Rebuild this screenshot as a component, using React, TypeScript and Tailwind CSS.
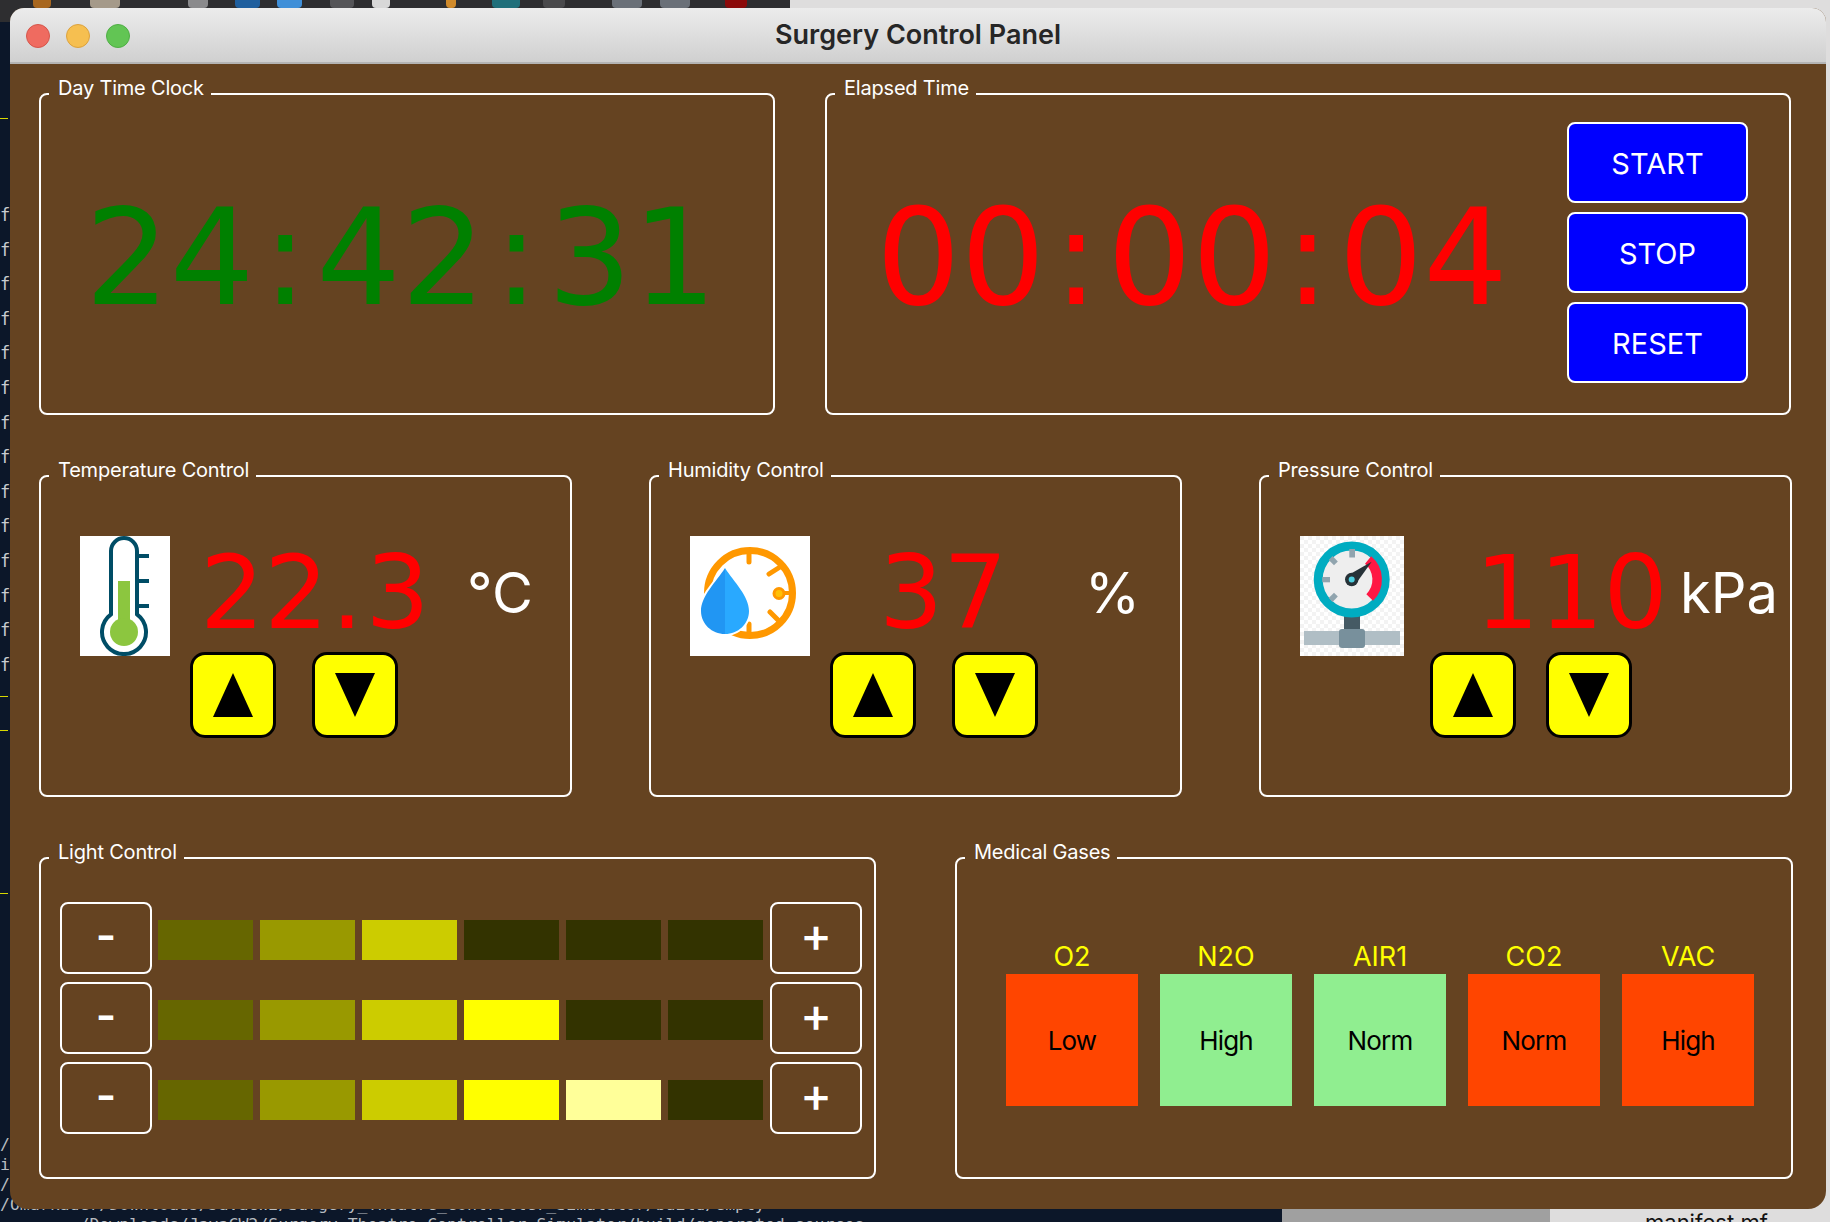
import React from "react";

const MONO = "font-['DejaVu_Sans_Mono',monospace]";
const SANS = "font-['Inter',sans-serif]";
const DIGITS = "font-['DejaVu_Sans',sans-serif]";

function Cells({ text, sep }: { text: string; sep: string }) {
  return (
    <span className={`flex whitespace-pre ${DIGITS}`} aria-label={text}>
      {text.split("").map((ch, i) =>
        /\d/.test(ch) ? (
          <span key={i}>{ch}</span>
        ) : (
          <span key={i} className={`flex justify-center ${sep}`}>
            {ch}
          </span>
        )
      )}
    </span>
  );
}

function Panel({ title, className, children }: { title: string; className: string; children?: React.ReactNode }) {
  return (
    <section className={`relative h-[322px] shrink-0 rounded-lg border-2 border-white ${className}`}>
      <span className="absolute left-[8px] top-[-19px] bg-[#654321] pl-[9px] pr-[7px] text-[20px] leading-[24px] tracking-[-0.2px] whitespace-nowrap text-white">
        {title}
      </span>
      {children}
    </section>
  );
}

function Thermometer() {
  return (
    <svg viewBox="0 0 90 120" className="h-[120px] w-[90px] shrink-0 bg-white">
      <path d="M59 20H69M59 45H69M59 70H69" stroke="#004d66" strokeWidth="4" />
      <path d="M31 78.3V15A13 13 0 0 1 57 15V78.3A22 22 0 1 1 31 78.3Z" fill="#fff" stroke="#004d66" strokeWidth="4" />
      <rect x="38" y="45" width="12" height="45" fill="#8cc63f" />
      <circle cx="44" cy="96" r="14" fill="#8cc63f" />
    </svg>
  );
}

function HumidityIcon() {
  return (
    <svg viewBox="0 0 120 120" className="h-[120px] w-[120px] shrink-0 bg-white">
      <circle cx="60" cy="57" r="42.5" fill="none" stroke="#ff9800" strokeWidth="7" />
      <path d="M59 18V26M59 88V96M90 31L79 38M80 76L89 85" stroke="#ff9800" strokeWidth="5" strokeLinecap="round" />
      <path d="M89 57H102" stroke="#ff9800" strokeWidth="4" />
      <circle cx="89" cy="57.5" r="5" fill="#ffc107" stroke="#ff9800" strokeWidth="3" />
      <path d="M35 30C24 46 9 58 9 75C9 89 21 100 35 100C49 100 61 89 61 75C61 58 46 46 35 30Z" fill="#fff" />
      <path d="M35 32C26 46 11 60 11 75C11 88 22 98 35 98Z" fill="#2196f3" />
      <path d="M35 32C44 46 59 60 59 75C59 88 48 98 35 98Z" fill="#29a9ff" />
    </svg>
  );
}

function PressureIcon() {
  return (
    <svg viewBox="0 0 104 120" className="h-[120px] w-[104px] shrink-0">
      <defs>
        <pattern id="chk" width="8" height="8" patternUnits="userSpaceOnUse">
          <rect width="8" height="8" fill="#ffffff" />
          <rect width="4" height="4" fill="#f3f3f3" />
          <rect x="4" y="4" width="4" height="4" fill="#f3f3f3" />
        </pattern>
      </defs>
      <rect width="104" height="120" fill="url(#chk)" />
      <rect x="44" y="78" width="16" height="18" fill="#455a64" />
      <rect x="4" y="95" width="96" height="14" fill="#b0bec5" />
      <rect x="39" y="93" width="26" height="19" rx="3" fill="#78909c" />
      <circle cx="51.7" cy="43.5" r="33.5" fill="#eeeeee" stroke="#00acc1" strokeWidth="9" />
      <path d="M68.1 24A25.5 25.5 0 0 1 69.7 61.5" fill="none" stroke="#ff1744" strokeWidth="9.5" />
      <rect x="49.3" y="13" width="5.7" height="8.5" fill="#90a4ae" />
      <rect x="22.3" y="41" width="7.7" height="5.3" fill="#90a4ae" />
      <rect x="29.5" y="22" width="7.5" height="5.4" fill="#90a4ae" transform="rotate(45 33.3 24.7)" />
      <rect x="29.5" y="58.6" width="7.5" height="5.4" fill="#90a4ae" transform="rotate(-45 33.3 61.3)" />
      <path d="M71.7 25.7L47.5 39.5L56 47.5Z" fill="#263238" />
      <circle cx="51.7" cy="43.5" r="6.7" fill="#263238" />
      <circle cx="51.7" cy="43.5" r="3" fill="#4dd0e1" />
    </svg>
  );
}

function Arrow({ dir }: { dir: "up" | "down" }) {
  return (
    <button className="flex h-[86px] w-[86px] items-center justify-center rounded-[15px] border-[3px] border-black bg-[#ffff00]">
      <svg viewBox="0 0 40 44" className="h-[44px] w-[40px]">
        <polygon points={dir === "up" ? "20,0 40,44 0,44" : "0,0 40,0 20,44"} fill="#000" />
      </svg>
    </button>
  );
}

function Control(props: {
  title: string;
  icon: React.ReactNode;
  value: string;
  unit: string;
  valueClass: string;
  buttonsClass: string;
}) {
  return (
    <Panel title={props.title} className="w-[533px]">
      <div className="flex pl-[39px] pt-[59px]">
        {props.icon}
        <div className="flex flex-col">
          <div className="flex h-[116px] items-start">
            <span className={`-mt-[1px] text-[101px] leading-[116px] text-[#ff0000] ${props.valueClass}`}>
              <Cells text={props.value} sep="w-[37px]" />
            </span>
            <span className="mt-[22px] text-[56px] leading-[70px] whitespace-nowrap text-white">{props.unit}</span>
          </div>
          <div className={`flex ${props.buttonsClass}`}>
            <Arrow dir="up" />
            <Arrow dir="down" />
          </div>
        </div>
      </div>
    </Panel>
  );
}

function TimeBtn({ label }: { label: string }) {
  return (
    <button className="flex h-[81px] w-[181px] items-center justify-center rounded-lg border-2 border-white bg-[#0000ff] pt-[2px] text-[29px] font-normal text-white">
      {label}
    </button>
  );
}

const LEVELS = ["bg-[#666600]", "bg-[#999900]", "bg-[#cccc00]", "bg-[#ffff00]", "bg-[#ffff99]", "bg-[#333300]"];

function LightRow({ on }: { on: number }) {
  return (
    <div className="flex h-[72px] items-center">
      <button className="flex h-[72px] w-[92px] items-center justify-center rounded-lg border-2 border-white pb-[6px] text-[44px] font-semibold leading-none text-white">
        -
      </button>
      <div className="ml-[6px] flex gap-[7px] pt-[4px]">
        {LEVELS.map((c, i) => (
          <div key={c} className={`h-[40px] w-[95px] ${i < on ? c : "bg-[#333300]"}`} />
        ))}
      </div>
      <button className="ml-[7px] flex h-[72px] w-[92px] items-center justify-center rounded-lg border-2 border-white pb-[6px] text-[48px] font-medium leading-none text-white">
        +
      </button>
    </div>
  );
}

function Gas({ name, state, ok }: { name: string; state: string; ok: boolean }) {
  return (
    <div className="flex w-[132px] flex-col items-center">
      <span className="text-[27px] leading-[34px] text-[#ffff00]">{name}</span>
      <div className={`flex h-[132px] w-[132px] items-center justify-center text-[26px] tracking-[-0.8px] text-black ${ok ? "bg-[#90ee90]" : "bg-[#ff4500]"}`}>
        {state}
      </div>
    </div>
  );
}

const TOP_BITS = [
  "left-[33px] w-[18px] bg-[#a8671f]",
  "left-[90px] w-[30px] bg-[#a59a8a]",
  "left-[188px] w-[20px] bg-[#8a8a8c]",
  "left-[235px] w-[25px] bg-[#1f5f9e]",
  "left-[277px] w-[25px] bg-[#3f8fd8]",
  "left-[330px] w-[24px] bg-[#555558]",
  "left-[372px] w-[18px] bg-[#d8d8d8]",
  "left-[446px] w-[10px] bg-[#d08a2a]",
  "left-[492px] w-[28px] bg-[#1f6f7a]",
  "left-[543px] w-[22px] bg-[#4a4a4c]",
  "left-[612px] w-[30px] bg-[#6a7078]",
  "left-[660px] w-[30px] bg-[#6a7078]",
  "left-[725px] w-[22px] bg-[#8b0a0a]",
];

const LEFT_LINES = ["f", "f", "f", "f", "f", "f", "f", "f", "f", "f", "f", "f", "f", "f"];

export default function App() {
  return (
    <div className={`relative h-[1222px] w-[1830px] overflow-hidden bg-[#0c1729] ${SANS}`}>
      {/* desktop behind the window */}
      <div className="absolute left-0 top-0 h-[22px] w-[790px] bg-[#2e2e30]" />
      {TOP_BITS.map((c) => (
        <div key={c} className={`absolute top-0 h-[8px] rounded-b-sm ${c}`} />
      ))}
      <div className="absolute left-[790px] top-0 h-[1222px] w-[1040px] bg-[#dedddd]" />
      <div className="absolute left-[1282px] top-[1209px] h-[13px] w-[268px] bg-[#a0a0a0]" />
      <div className="absolute left-[790px] top-[1209px] h-[13px] w-[492px] bg-[#0c1729]" />
      <div className="absolute left-[1645px] top-[1209px] text-[22px] leading-[26px] text-[#111]">manifest.mf</div>
      <div className={`absolute left-0 top-[30px] flex h-[700px] w-[10px] flex-col pt-[168px] text-[17px] leading-[34.6px] text-[#c8ccd0] ${MONO}`}>
        {LEFT_LINES.map((l, i) => (
          <span key={i}>{l}</span>
        ))}
      </div>
      <div className="absolute left-0 top-[118px] h-[1px] w-[8px] bg-[#d8d800]" />
      <div className="absolute left-0 top-[696px] h-[1px] w-[8px] bg-[#d8d800]" />
      <div className="absolute left-0 top-[730px] h-[1px] w-[8px] bg-[#d8d800]" />
      <div className="absolute left-0 top-[893px] h-[1px] w-[8px] bg-[#d8d800]" />
      <div className={`absolute left-0 top-[1135px] whitespace-pre text-[16.5px] leading-[20px] text-[#b8bcc0] ${MONO}`}>
        {"/(\ni\n/(\n/Omarkader/Downloads/JavaCW2/Surgery_Theatre_Controller_Simulator/build/empty\n        /Downloads/JavaCW2/Surgery_Theatre_Controller_Simulator/build/generated-sources"}
      </div>

      {/* window */}
      <div className="absolute left-[10px] top-[8px] flex h-[1201px] w-[1816px] flex-col overflow-hidden rounded-b-[18px] rounded-t-[14px] bg-[#654321]">
        <header className="relative flex h-[56px] shrink-0 items-center justify-center border-b-2 border-[#b4b4b4] bg-gradient-to-b from-[#ececec] to-[#d0d0d0]">
          <div className="absolute left-[16px] top-[16px] flex gap-[16px]">
            <span className="h-[24px] w-[24px] rounded-full border border-[#d5564b] bg-[#ef6b60]" />
            <span className="h-[24px] w-[24px] rounded-full border border-[#dca23e] bg-[#f6bf50]" />
            <span className="h-[24px] w-[24px] rounded-full border border-[#4fae45] bg-[#62c554]" />
          </div>
          <h1 className="text-[27px] font-semibold text-[#262626]">Surgery Control Panel</h1>
        </header>

        <main className="flex flex-col gap-[60px] pl-[29px] pt-[29px]">
          <div className="flex gap-[50px]">
            <Panel title="Day Time Clock" className="flex w-[736px] items-center">
              <span className="pl-[44px] pt-[8px] text-[133px] leading-none text-[#008000]">
                <Cells text="24:42:31" sep="w-[62px]" />
              </span>
            </Panel>
            <Panel title="Elapsed Time" className="flex w-[966px] items-center justify-between">
              <span className="pl-[49px] pt-[8px] text-[133px] leading-none text-[#ff0000]">
                <Cells text="00:00:04" sep="w-[62px]" />
              </span>
              <div className="mb-[3px] mr-[41px] flex flex-col gap-[9px]">
                <TimeBtn label="START" />
                <TimeBtn label="STOP" />
                <TimeBtn label="RESET" />
              </div>
            </Panel>
          </div>

          <div className="flex gap-[77px]">
            <Control
              title="Temperature Control"
              icon={<Thermometer />}
              value="22.3"
              unit="°C"
              valueClass="ml-[30px] w-[267px]"
              buttonsClass="ml-[20px] gap-[36px]"
            />
            <Control
              title="Humidity Control"
              icon={<HumidityIcon />}
              value="37"
              unit="%"
              valueClass="ml-[69px] w-[206px]"
              buttonsClass="ml-[20px] gap-[36px]"
            />
            <Control
              title="Pressure Control"
              icon={<PressureIcon />}
              value="110"
              unit="kPa"
              valueClass="ml-[71px] w-[205px]"
              buttonsClass="ml-[26px] gap-[30px]"
            />
          </div>

          <div className="flex gap-[79px]">
            <Panel title="Light Control" className="w-[837px]">
              <div className="flex flex-col gap-[8px] pl-[19px] pt-[43px]">
                <LightRow on={3} />
                <LightRow on={4} />
                <LightRow on={5} />
              </div>
            </Panel>
            <Panel title="Medical Gases" className="w-[838px]">
              <div className="flex gap-[22px] pl-[49px] pt-[81px]">
                <Gas name="O2" state="Low" ok={false} />
                <Gas name="N2O" state="High" ok={true} />
                <Gas name="AIR1" state="Norm" ok={true} />
                <Gas name="CO2" state="Norm" ok={false} />
                <Gas name="VAC" state="High" ok={false} />
              </div>
            </Panel>
          </div>
        </main>
      </div>
    </div>
  );
}
